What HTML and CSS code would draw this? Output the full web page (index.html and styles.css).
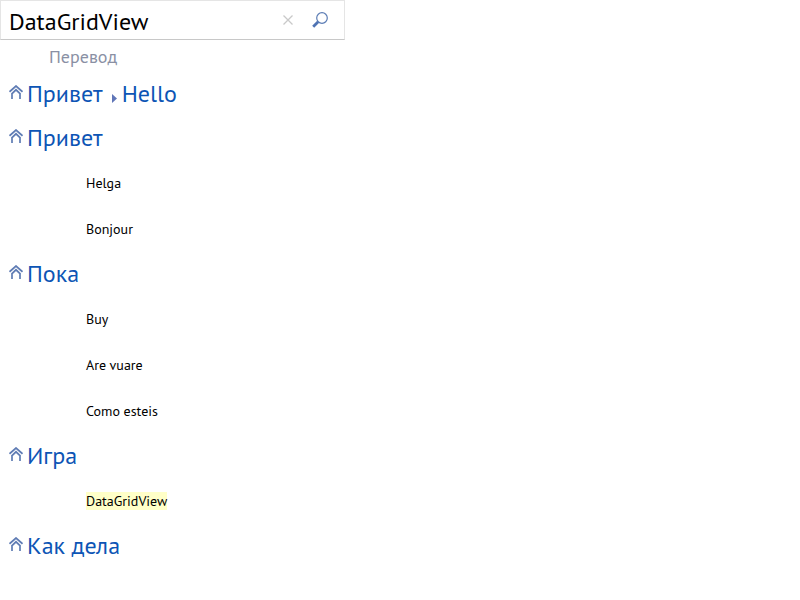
FILE: index.html
```html
<!DOCTYPE html>
<html lang="ru">
<head>
<meta charset="utf-8">
<title>DataGridView</title>
<link rel="stylesheet" href="styles.css">
</head>
<body>
<svg class="defs" width="0" height="0">
  <symbol id="up" viewBox="0 0 14 14"><path d="M.5 6.800 7 1l6.500 5.800M2.500 9.200 7 4.800l4.500 4.400M3 8.500V14M11 8.500V14" fill="none" stroke="currentColor" stroke-width="1.700"/></symbol>
</svg>
<div class="search">
  <span class="query">DataGridView</span>
  <svg class="clear" viewBox="0 0 10 10"><path d="M.5.5l9 9M9.500.5l-9 9" stroke="#c9c9c9" stroke-width="1.300"/></svg>
  <svg class="find" viewBox="0 0 16 16"><circle cx="10" cy="6" r="5.300" fill="none" stroke="#5c7db5" stroke-width="1.200"/><path d="M6.200 9.800 1.200 14.800" stroke="#4f73b3" stroke-width="2.800"/></svg>
</div>
<div class="column">Перевод</div>
<div class="group"><svg class="up"><use href="#up"/></svg><span>Привет</span><svg class="arrow" viewBox="0 0 5 9"><path d="M0 0 5 4.500 0 9z" fill="#6076b8"/></svg><span>Hello</span></div>
<div class="group"><svg class="up"><use href="#up"/></svg><span>Привет</span></div>
<div class="item"><span>Helga</span></div>
<div class="item"><span>Bonjour</span></div>
<div class="group"><svg class="up"><use href="#up"/></svg><span>Пока</span></div>
<div class="item"><span>Buy</span></div>
<div class="item"><span>Are vuare</span></div>
<div class="item"><span>Como esteis</span></div>
<div class="group"><svg class="up"><use href="#up"/></svg><span>Игра</span></div>
<div class="item"><span class="found">DataGridView</span></div>
<div class="group"><svg class="up"><use href="#up"/></svg><span>Как дела</span></div>
</body>
</html>
```
FILE: styles.css
```css
* { box-sizing: border-box; }
body { margin: 0; background: #fff; font-family: "PT Sans", "Noto Sans", sans-serif; color: #000; white-space: nowrap; overflow: hidden; }
.defs { display: block; position: absolute; }
.search { display: flex; align-items: center; width: 345px; height: 40px; padding: 0 16px 0 8px; border: 1px solid #e5e5e5; border-bottom-color: #c8c8c8; }
.query { flex: 1; font-size: 24px; line-height: 34px; padding-top: 3px; }
.clear { width: 10px; height: 10px; margin-right: 19px; }
.find { width: 16px; height: 16px; }
.column { height: 32px; padding: 1px 0 0 49px; font-size: 18px; line-height: 32px; color: #8a90a4; }
.group { display: flex; height: 44px; padding-left: 9px; align-items: center; font-size: 24px; line-height: 44px; color: #0d55b5; }
.up { width: 14px; height: 14px; margin: -4px 4px 0 0; color: #5f7cb4; }
.arrow { width: 5px; height: 9px; margin: 9px 5px 0 9px; }
.item { display: flex; align-items: center; height: 46px; padding-left: 86px; font-size: 14px; line-height: 18px; }
.found { background: #ffffc8; }
```
